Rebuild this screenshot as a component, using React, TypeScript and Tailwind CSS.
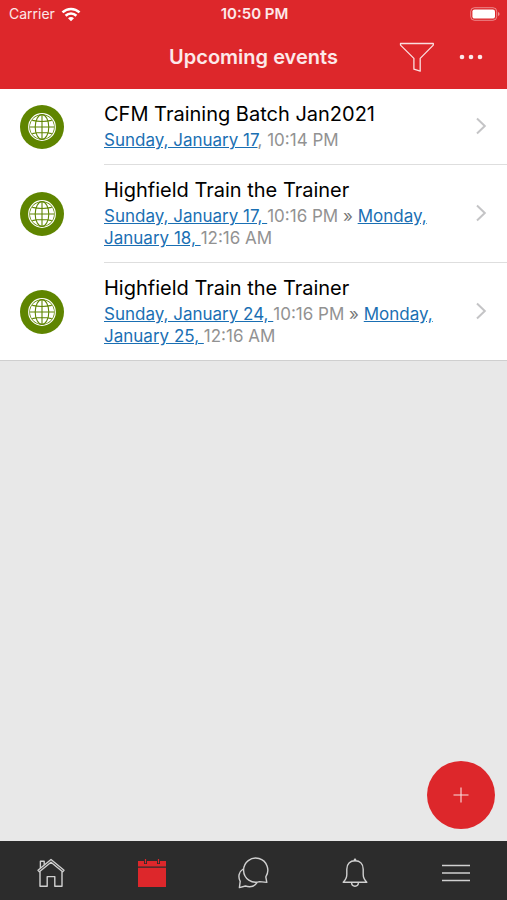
import { Fragment } from "react";

type EventPart = { date: string; comma?: string; time: string };

const events: { title: string; parts: EventPart[] }[] = [
  {
    title: "CFM Training Batch Jan2021",
    parts: [{ date: "Sunday, January 17", comma: ", ", time: "10:14 PM" }],
  },
  {
    title: "Highfield Train the Trainer",
    parts: [
      { date: "Sunday, January 17, ", time: "10:16 PM" },
      { date: "Monday, January 18, ", time: "12:16 AM" },
    ],
  },
  {
    title: "Highfield Train the Trainer",
    parts: [
      { date: "Sunday, January 24, ", time: "10:16 PM" },
      { date: "Monday, January 25, ", time: "12:16 AM" },
    ],
  },
];

function GlobeBadge() {
  return (
    <div className="flex h-11 w-11 shrink-0 items-center justify-center rounded-full bg-[#5f8500]">
      <svg viewBox="0 0 28 28" className="h-7 w-7" fill="none">
        <circle cx="14" cy="14" r="13.3" stroke="#fff" strokeWidth="1.2" />
        <circle cx="14" cy="14" r="12" fill="#fff" />
        <g stroke="#5f8500" strokeWidth="1.1">
          <path d="M14 2v24M2 14h24M4.2 7.4q9.8 2.2 19.6 0M4.2 20.6q9.8-2.2 19.6 0" />
          <ellipse cx="14" cy="14" rx="6.8" ry="12.4" />
        </g>
      </svg>
    </div>
  );
}

function Header() {
  return (
    <header className="bg-[#dd272b] text-white">
      <div className="grid h-7 grid-cols-3 items-center pr-[7px] pl-[9px] text-sm leading-5">
        <div className="flex items-center gap-[6px] text-white/90">
          <span>Carrier</span>
          <svg viewBox="0 0 20 15" className="h-[15px] w-5" fill="none" stroke="#fff" strokeWidth="2.6">
            <path d="M1.5 5.4c4.8-4.6 12.2-4.6 17 0M4.6 8.7c3.1-2.9 7.7-2.9 10.8 0" />
            <path d="M7 11.2c1.8-1.5 4.2-1.5 6 0l-3 3z" fill="#fff" stroke="none" />
          </svg>
        </div>
        <span className="text-center text-[15px] font-semibold whitespace-nowrap text-white/90">10:50 PM</span>
        <svg viewBox="0 0 30 14" className="h-[14px] w-[30px] justify-self-end" fill="none">
          <rect x=".7" y=".7" width="26" height="12.6" rx="3.8" stroke="#fff" strokeOpacity=".45" />
          <rect x="2.4" y="2.4" width="22.6" height="9.2" rx="2.2" fill="#fff" />
          <path d="M28 5v4q1.6-.5 1.6-2T28 5z" fill="#fff" fillOpacity=".5" />
        </svg>
      </div>
      <div className="grid h-[61px] grid-cols-[1fr_auto_1fr] items-center pr-6 pb-[3px]">
        <h1 className="col-start-2 pl-6 text-xl leading-6 font-semibold text-white/90">Upcoming events</h1>
        <div className="flex items-center justify-end gap-6">
          <button type="button" aria-label="Filter">
            <svg viewBox="0 0 36 30" className="h-[30px] w-9" fill="none" stroke="#fff" strokeOpacity=".85" strokeWidth="1.3" strokeLinejoin="round">
              <path d="M1.5 1.5h32.8v1.6L21.2 16.4v12.8l-6.3-2V16.4L1.5 3.1z" />
            </svg>
          </button>
          <button type="button" aria-label="More">
            <svg viewBox="0 0 24 6" className="h-[6px] w-6" fill="#fff" fillOpacity=".9">
              <circle cx="3" cy="3" r="2.3" />
              <circle cx="12" cy="3" r="2.3" />
              <circle cx="21" cy="3" r="2.3" />
            </svg>
          </button>
        </div>
      </div>
    </header>
  );
}

function EventRow({ title, parts, last }: { title: string; parts: EventPart[]; last: boolean }) {
  return (
    <li className={last ? "flex border-b border-[#cfcfcf] bg-white pl-5" : "flex bg-white pl-5"}>
      <div className="flex w-[84px] shrink-0 items-center">
        <GlobeBadge />
      </div>
      <div
        className={
          last
            ? "flex flex-1 items-center justify-between pt-3 pr-5 pb-[13px]"
            : "flex flex-1 items-center justify-between border-b border-[#dedede] pt-3 pr-5 pb-[13px]"
        }
      >
        <div className="max-w-[340px]">
          <h2 className="mb-[2px] text-xl leading-[26px] text-black">{title}</h2>
          <p className="text-[17px] leading-[22px] text-[#929292]">
            {parts.map((part, i) => (
              <Fragment key={part.date}>
                {i > 0 && <span className="text-[#777]"> » </span>}
                <a href="#event" className="text-[#1a6fb3] underline">
                  {part.date}
                </a>
                {part.comma}
                {part.time}
              </Fragment>
            ))}
          </p>
        </div>
        <svg viewBox="0 0 12 18" className="h-[18px] w-3 shrink-0" fill="none" stroke="#c4c4c6" strokeWidth="2">
          <path d="M2 1.5L9.8 9 2 16.5" />
        </svg>
      </div>
    </li>
  );
}

function TabBar() {
  return (
    <nav className="grid h-[59px] grid-cols-5 bg-[#2c2c2c] pt-1 text-[#d0d0d0]">
      <button type="button" aria-label="Home" className="flex items-center justify-center">
        <svg viewBox="0 0 28 30" className="h-[30px] w-7" fill="none" stroke="currentColor" strokeWidth="1.4" strokeLinejoin="round">
          <path d="M1 12.2L14 1.5l13 10.7-1.4 1.6L14 4.2 2.4 13.8z" />
          <path d="M3 13.5v14.8h7.2V18.6h7.6v9.7H25V13.5M3.4 10V3.2h3.8v3.6" />
        </svg>
      </button>
      <button type="button" aria-label="Events" className="flex items-center justify-center">
        <svg viewBox="0 0 28 28" className="h-7 w-7" fill="none">
          <path d="M0 2h28v5.6H0zM0 8.8h28V28H0z" fill="#dd272b" />
          <path d="M7.5 1.5V5M20.5 1.5V5" stroke="#2c2c2c" strokeWidth="3" />
          <path d="M7.5 0v4.2M20.5 0v4.2" stroke="#dd272b" strokeWidth="1.2" />
        </svg>
      </button>
      <button type="button" aria-label="Messages" className="flex items-center justify-center">
        <svg viewBox="0 0 32 32" className="h-8 w-8" fill="none" stroke="currentColor" strokeWidth="1.4" strokeLinejoin="round">
          <path d="M29.8 25.4l-1-5.6A12.1 12.1 0 1 0 22.6 24.6z" />
          <path d="M6.2 12C1.8 14.6.8 20 3.2 24.4L2.4 30.6l6-1.6c4.6 1.6 9.2.2 11.8-3.6" />
        </svg>
      </button>
      <button type="button" aria-label="Notifications" className="flex items-center justify-center">
        <svg viewBox="0 0 26 30" className="h-[30px] w-[26px]" fill="none" stroke="currentColor" strokeWidth="1.4" strokeLinejoin="round">
          <path d="M1.2 24.2c2.8-2.6 3.6-4.2 3.6-7.6v-5.4c0-5.2 3.2-8.4 8.2-8.4s8.2 3.2 8.2 8.4v5.4c0 3.4.8 5 3.6 7.6z" />
          <path d="M9.6 24.6c0 4.8 6.8 4.8 6.8 0" />
          <circle cx="13" cy="1.9" r="1.3" fill="currentColor" stroke="none" />
        </svg>
      </button>
      <button type="button" aria-label="Menu" className="flex items-center justify-center">
        <svg viewBox="0 0 28 18" className="h-[18px] w-7" fill="none" stroke="currentColor" strokeWidth="1.3">
          <path d="M0 1.5h28M0 9h28M0 16.5h28" />
        </svg>
      </button>
    </nav>
  );
}

export default function App() {
  return (
    <div className="flex min-h-screen flex-col bg-[#e8e8e8] font-['Inter',sans-serif]">
      <Header />
      <main className="flex flex-1 flex-col">
        <ul>
          {events.map((event, i) => (
            <EventRow key={i} title={event.title} parts={event.parts} last={i === events.length - 1} />
          ))}
        </ul>
        <button
          type="button"
          aria-label="Add event"
          className="mt-auto mr-3 mb-3 flex h-[68px] w-[68px] items-center justify-center self-end rounded-full bg-[#dd272b]"
        >
          <svg viewBox="0 0 16 16" className="h-4 w-4" stroke="#fff" strokeOpacity=".85" strokeWidth="1.1">
            <path d="M8 .5v15M.5 8h15" />
          </svg>
        </button>
      </main>
      <TabBar />
    </div>
  );
}
